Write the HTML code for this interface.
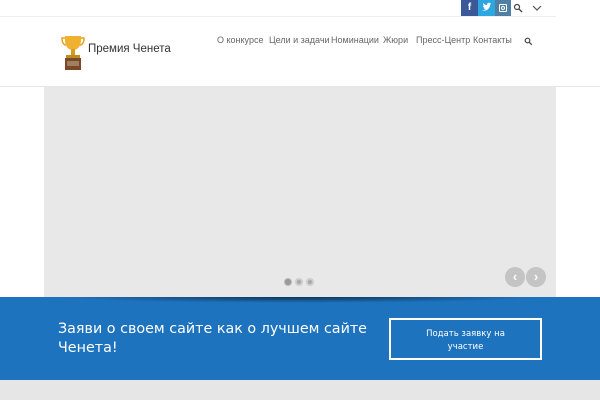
<!DOCTYPE html><html><head><meta charset="utf-8"><style>
*{margin:0;padding:0;box-sizing:border-box}
body{width:600px;height:400px;overflow:hidden;background:#fff;font-family:"Liberation Sans","DejaVu Sans",sans-serif;position:relative}
.a{position:absolute}
.nav{top:35px;font-size:9px;color:#666;font-family:"Liberation Sans",sans-serif;white-space:nowrap}
</style></head><body>
<div class="a" style="left:0;top:16px;width:556px;height:1px;background:#eee"></div>
<div class="a" style="left:461px;top:0;width:17px;height:16px;background:#3b5998;color:#fff;font-size:10px;font-weight:bold;text-align:center;line-height:16px">f</div>
<div class="a" style="left:478px;top:0;width:17px;height:16px;background:#2ca7e0"><svg width="17" height="16"><path d="M4 10c2 1 5 1 7-2 1-1 1-2 1-3l1-1-1 0 1-1-1 0c-1-1-3 0-3 2-2 0-3-1-4-2 0 1 0 2 1 3l-1 0c0 1 1 2 2 2l-1 0c0 1 1 1 2 1-1 1-3 1-4 1z" fill="#fff"/></svg></div>
<div class="a" style="left:495px;top:0;width:16px;height:16px;background:#517fa4"><div class="a" style="left:4px;top:4px;width:8px;height:8px;border:1px solid #fff;border-radius:1px"></div><div class="a" style="left:6px;top:6px;width:4px;height:4px;border:1px solid #fff;border-radius:50%"></div></div>
<svg class="a" style="left:513px;top:3px" width="10" height="10"><circle cx="4" cy="4" r="2.5" stroke="#444" stroke-width="1.2" fill="none"/><path d="M6 6l3 3" stroke="#444" stroke-width="1.3"/></svg>
<svg class="a" style="left:532px;top:4px" width="10" height="8"><path d="M1 2l4 4 4-4" stroke="#555" stroke-width="1.2" fill="none"/></svg>
<svg class="a" style="left:60px;top:34px" width="26" height="38"><path d="M5 2h16v4c0 6-3 10-8 10S5 12 5 6z" fill="#f0b030"/><path d="M5 4H2c0 5 2 7 4 7M21 4h3c0 5-2 7-4 7" stroke="#e8a020" stroke-width="1.5" fill="none"/><rect x="11" y="15" width="4" height="6" fill="#d99a20"/><rect x="6" y="21" width="14" height="3" fill="#c08a20"/><rect x="5" y="24" width="16" height="12" fill="#7a4a28"/><rect x="7" y="27" width="12" height="5" fill="#a08060"/></svg>
<div class="a" style="left:88px;top:43px;font-size:11.5px;color:#333;font-family:'Liberation Sans',sans-serif">Премия Ченета</div>
<div class="a nav" style="left:217px">О конкурсе</div>
<div class="a nav" style="left:269px">Цели и задачи</div>
<div class="a nav" style="left:331px">Номинации</div>
<div class="a nav" style="left:383px">Жюри</div>
<div class="a nav" style="left:416px">Пресс-Центр</div>
<div class="a nav" style="left:473px">Контакты</div>
<svg class="a" style="left:524px;top:37px" width="9" height="9"><circle cx="3.5" cy="3.5" r="2.3" stroke="#444" stroke-width="1.2" fill="none"/><path d="M5.3 5.3l2.5 2.5" stroke="#444" stroke-width="1.3"/></svg>
<div class="a" style="left:0;top:86px;width:600px;height:1px;background:#e6e6e6"></div>
<div class="a" style="left:44px;top:87px;width:512px;height:210px;background:#e8e8e8"></div>
<div class="a" style="left:284px;top:278px;width:8px;height:8px;border-radius:50%;background:#999;border:1px solid #bbb"></div>
<div class="a" style="left:295px;top:278px;width:8px;height:8px;border-radius:50%;background:#aaa;border:2px solid #ccc"></div>
<div class="a" style="left:306px;top:278px;width:8px;height:8px;border-radius:50%;background:#aaa;border:2px solid #ccc"></div>
<div class="a" style="left:505px;top:267px;width:20px;height:20px;border-radius:50%;background:#c4c4c4;color:#fff;font-size:13px;text-align:center;line-height:19px;font-weight:bold">‹</div>
<div class="a" style="left:526px;top:267px;width:20px;height:20px;border-radius:50%;background:#c4c4c4;color:#fff;font-size:13px;text-align:center;line-height:19px;font-weight:bold">›</div>
<div class="a" style="left:0;top:297px;width:600px;height:83px;background:#1e73be"></div>
<div class="a" style="left:60px;top:297px;width:480px;height:6px;background:radial-gradient(ellipse at 50% 0,rgba(0,0,0,.55),rgba(0,0,0,0) 70%)"></div>
<div class="a" style="left:58px;top:320px;font-family:'DejaVu Sans',sans-serif;font-size:14.3px;color:#fff;line-height:19px;width:330px">Заяви о своем сайте как о лучшем сайте Ченета!</div>
<div class="a" style="left:389px;top:318px;width:153px;height:42px;border:2px solid #fff;color:#fff;font-family:'DejaVu Sans',sans-serif;font-size:8.5px;text-align:center;padding-top:8px;line-height:13px">Подать заявку на<br>участие</div>
<div class="a" style="left:0;top:380px;width:600px;height:20px;background:#e6e6e6"></div>
</body></html>
